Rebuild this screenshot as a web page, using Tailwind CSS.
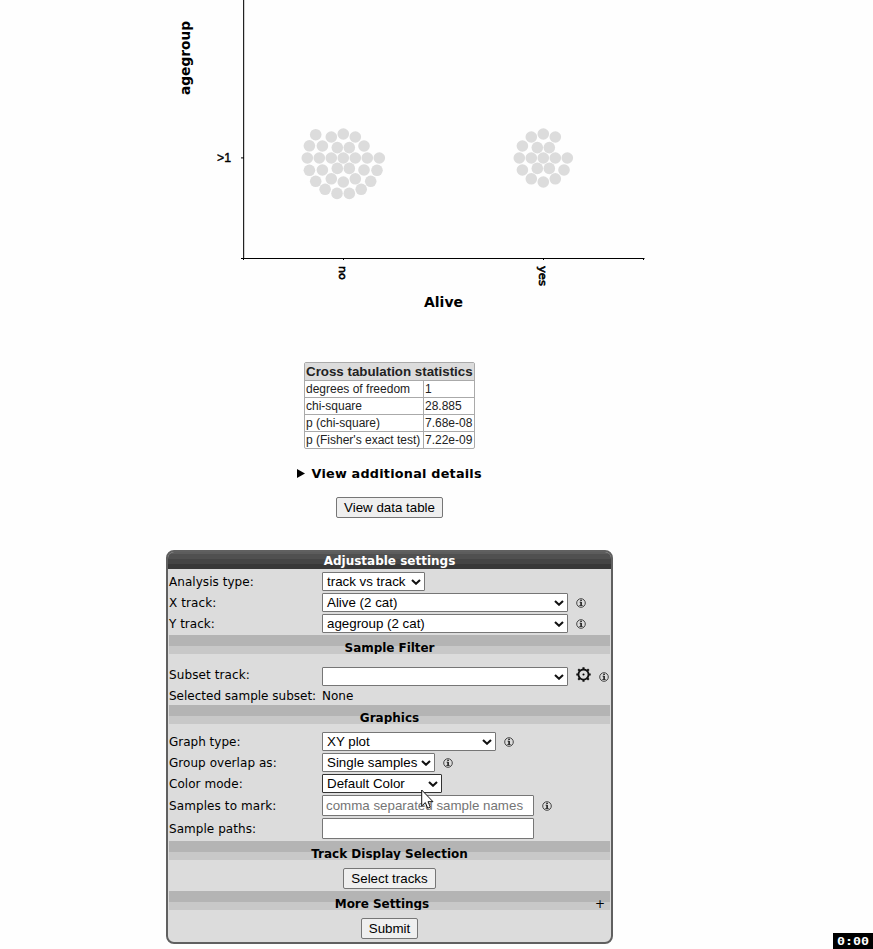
<!DOCTYPE html>
<html lang="en"><head><meta charset="utf-8"><title>Plot</title>
<script src="https://cdn.jsdelivr.net/npm/@tailwindcss/browser@4"></script></head>
<body class="relative h-[949px] w-[873px] overflow-hidden bg-[#fefefe] font-['DejaVu_Sans',sans-serif] text-[12px] text-black">
<svg class="block h-[320px] w-[873px]" viewBox="0 0 873 320">
<g stroke="#000" fill="none"><path d="M243.6 0V259" stroke="#222" stroke-width="1.2"/><path d="M241 258.5H644.5M343.5 258V260M543.5 258V260M643.5 258V260M241 157.9H244M243.5 258V260"/></g>
<g fill="#dcdcdc">
<circle cx="307.3" cy="158" r="5.8"/><circle cx="319.3" cy="158" r="5.8"/><circle cx="331.3" cy="158" r="5.8"/><circle cx="343.3" cy="158" r="5.8"/><circle cx="355.3" cy="158" r="5.8"/><circle cx="367.3" cy="158" r="5.8"/><circle cx="379.3" cy="158" r="5.8"/>
<circle cx="315.7" cy="134.7" r="5.8"/><circle cx="331.3" cy="137" r="5.8"/><circle cx="343.3" cy="134" r="5.8"/><circle cx="355.3" cy="137" r="5.8"/><circle cx="309.4" cy="145.8" r="5.8"/><circle cx="322.4" cy="146" r="5.8"/><circle cx="337.3" cy="147.6" r="5.8"/><circle cx="349.3" cy="147.6" r="5.8"/><circle cx="364" cy="146" r="5.8"/>
<circle cx="309.4" cy="170.3" r="5.8"/><circle cx="322.4" cy="170" r="5.8"/><circle cx="337.3" cy="168.4" r="5.8"/><circle cx="349.3" cy="168.4" r="5.8"/><circle cx="364" cy="170" r="5.8"/><circle cx="377" cy="170.3" r="5.8"/><circle cx="315.7" cy="181.3" r="5.8"/><circle cx="331.3" cy="178.8" r="5.8"/><circle cx="343.3" cy="182" r="5.8"/><circle cx="355.3" cy="178.8" r="5.8"/><circle cx="370.7" cy="181.3" r="5.8"/><circle cx="325.1" cy="189.3" r="5.8"/><circle cx="337" cy="193.4" r="5.8"/><circle cx="349.3" cy="193.4" r="5.8"/><circle cx="361.2" cy="189.3" r="5.8"/>
<circle cx="519.3" cy="158" r="5.8"/><circle cx="531.3" cy="158" r="5.8"/><circle cx="543.3" cy="158" r="5.8"/><circle cx="555.3" cy="158" r="5.8"/><circle cx="567.3" cy="158" r="5.8"/>
<circle cx="531.3" cy="137" r="5.8"/><circle cx="543.3" cy="134" r="5.8"/><circle cx="555.3" cy="137" r="5.8"/><circle cx="522.4" cy="146" r="5.8"/><circle cx="537.3" cy="147.6" r="5.8"/><circle cx="549.3" cy="147.6" r="5.8"/><circle cx="522.4" cy="170" r="5.8"/><circle cx="537.3" cy="168.4" r="5.8"/><circle cx="549.3" cy="168.4" r="5.8"/><circle cx="564" cy="170" r="5.8"/><circle cx="531.3" cy="178.8" r="5.8"/><circle cx="543.3" cy="182" r="5.8"/><circle cx="555.3" cy="178.8" r="5.8"/></g>
<g font-family="DejaVu Sans, sans-serif" fill="#000">
<text transform="translate(190 95) rotate(-90)" font-size="13.6" font-weight="bold" textLength="74" lengthAdjust="spacingAndGlyphs">agegroup</text>
<text x="424" y="307" font-size="13.3" font-weight="bold" textLength="39" lengthAdjust="spacingAndGlyphs">Alive</text>
<text x="217" y="162" font-family="Liberation Sans, sans-serif" font-size="12" textLength="14" lengthAdjust="spacingAndGlyphs" stroke="#000" stroke-width=".4">&gt;1</text>
<text transform="translate(339 266) rotate(90)" font-size="11" stroke="#000" stroke-width=".6" textLength="14" lengthAdjust="spacingAndGlyphs">no</text>
<text transform="translate(539 266) rotate(90)" font-size="11" stroke="#000" stroke-width=".6" textLength="20" lengthAdjust="spacingAndGlyphs">yes</text></g>
</svg>
<svg class="hidden"><defs>
<symbol id="info" viewBox="0 0 10 10"><circle cx="5" cy="5" r="4.3" fill="none" stroke="#333" stroke-width=".9"/><path d="M3.6 4.2H5M3.3 7.5H6.7" fill="none" stroke="#222" stroke-width=".8"/><path d="M5.1 3.9V7.6" stroke="#111" stroke-width="1.5"/><rect x="4.3" y="1.7" width="1.5" height="1.4" fill="#111"/></symbol>
<symbol id="chev" viewBox="0 0 10 6"><path d="M1 1L5 4.7L9 1" fill="none" stroke="#111" stroke-width="2.1"/></symbol></defs></svg>
<main class="ml-[166px] w-[447px]">
<div class="flex flex-col items-center pt-[42px]">
<div class="h-[87px] w-[171px] rounded-[2px] border border-[#aaa] bg-white font-['Liberation_Sans',sans-serif] text-[12px] text-[#222]">
<div class="h-[18px] border-b border-[#aaa] bg-[#dcdcdc] pl-px text-[13.33px] leading-[17px] font-bold whitespace-nowrap"><span>Cross tabulation statistics</span></div>
<div class="grid grid-cols-[119px_50px] grid-rows-[17px_17px_17px_16px] leading-[16px] whitespace-nowrap [&>*]:border-[#aaa] [&>*]:pl-[1px] [&>*:nth-child(odd)]:border-r [&>*:nth-child(-n+6)]:border-b">
<div>degrees of freedom</div><div>1</div><div>chi-square</div><div>28.885</div><div>p (chi-square)</div><div>7.68e-08</div><div>p (Fisher's exact test)</div><div>7.22e-09</div></div></div>
<div class="mt-[16px] flex h-[17px] w-[186px] items-center text-[12.8px] font-bold whitespace-nowrap"><svg class="mr-[7px] h-[9px] w-[8px] shrink-0" viewBox="0 0 8 9"><path d="M0 0L8 4.5L0 9z"/></svg><span class="tracking-[0.22px]">View additional details</span></div>
<div class="mt-[15px] flex h-[21px] w-[107px] items-center justify-center rounded-[2px] border border-[#767676] bg-[#efefef] font-['Liberation_Sans',sans-serif] text-[13.33px]">View data table</div>
</div>
<section class="mt-[32px] h-[394px] overflow-hidden rounded-[8px] border-2 border-[#606060] bg-[#dcdcdc]">
<h2 class="h-[17px] bg-[linear-gradient(#5c5c5c_0_2px,#505050_2px_7px,#454545_7px_12px,#383838_12px)] text-center text-[12px] leading-[18px] font-bold text-white">Adjustable settings</h2>
<div class="grid grid-cols-[153px_1fr] grid-rows-[21px_21px_21px] items-center pt-[2px] pl-px">
<span class="tracking-[0.05px]">Analysis type:</span><div class="flex h-[19px] w-[103px] items-center justify-between rounded-[1px] border border-[#767676] bg-white pr-[3px] pl-[4px] font-['Liberation_Sans',sans-serif] text-[13.33px]">track vs track<svg class="h-[6px] w-[10px]"><use href="#chev"/></svg></div>
<span class="tracking-[0.1px]">X track:</span><div class="flex items-center gap-[8.4px]"><div class="flex h-[19px] w-[246px] items-center justify-between rounded-[1px] border border-[#767676] bg-white pr-[3px] pl-[4px] font-['Liberation_Sans',sans-serif] text-[13.33px]">Alive (2 cat)<svg class="h-[6px] w-[10px]"><use href="#chev"/></svg></div><svg class="h-[10px] w-[10px]"><use href="#info"/></svg></div>
<span>Y track:</span><div class="flex items-center gap-[8.4px]"><div class="flex h-[19px] w-[246px] items-center justify-between rounded-[1px] border border-[#767676] bg-white pr-[3px] pl-[4px] font-['Liberation_Sans',sans-serif] text-[13.33px]">agegroup (2 cat)<svg class="h-[6px] w-[10px]"><use href="#chev"/></svg></div><svg class="h-[10px] w-[10px]"><use href="#info"/></svg></div>
</div>
<h3 class="mx-px mt-px h-[19px] overflow-hidden bg-[linear-gradient(#b4b4b4_0_11px,#c8c8c8_11px)] text-center leading-[26px] font-bold tracking-[-0.05px]">Sample Filter</h3>
<div class="grid grid-cols-[153px_1fr] grid-rows-[19px_21px] items-center pt-[13px] pl-px">
<span class="-mt-[4px] tracking-[0.1px]">Subset track:</span><div class="flex items-center"><div class="flex h-[19px] w-[246px] items-center justify-end rounded-[1px] border border-[#767676] bg-white pr-[3px]"><svg class="h-[6px] w-[10px]"><use href="#chev"/></svg></div><svg class="-mt-[4px] ml-[8px] h-[15px] w-[15px]" viewBox="0 0 16 16"><circle cx="8" cy="8" r="5.4" fill="none" stroke="#111" stroke-width="2"/><circle cx="8" cy="8" r="1.1"/><path d="M8 0.3V3M8 13V15.7M.3 8H3M13 8H15.7M2.4 2.4L4.5 4.5M11.5 11.5L13.6 13.6M13.6 2.4L11.5 4.5M4.5 11.5L2.4 13.6" stroke="#111" stroke-width="2.2"/></svg><svg class="ml-[8.4px] h-[10px] w-[10px]"><use href="#info"/></svg></div>
<span class="-mt-[2px]">Selected sample subset:</span><span class="-mt-[2px]">None</span></div>
<h3 class="mx-px -mt-[2px] h-[19px] overflow-hidden bg-[linear-gradient(#b4b4b4_0_11px,#c8c8c8_11px)] text-center leading-[26px] font-bold">Graphics</h3>
<div class="grid grid-cols-[153px_1fr] grid-rows-[21px_21px_21px_23px_23px] items-center pt-[7px] pl-px">
<span>Graph type:</span><div class="flex items-center gap-[8.4px]"><div class="flex h-[19px] w-[174px] items-center justify-between rounded-[1px] border border-[#767676] bg-white pr-[3px] pl-[4px] font-['Liberation_Sans',sans-serif] text-[13.33px]">XY plot<svg class="h-[6px] w-[10px]"><use href="#chev"/></svg></div><svg class="h-[10px] w-[10px]"><use href="#info"/></svg></div>
<span class="tracking-[0.05px]">Group overlap as:</span><div class="flex items-center gap-[8.4px]"><div class="flex h-[19px] w-[113px] items-center justify-between rounded-[1px] border border-[#767676] bg-white pr-[3px] pl-[4px] font-['Liberation_Sans',sans-serif] text-[13.33px] whitespace-nowrap">Single samples<svg class="h-[6px] w-[10px] shrink-0"><use href="#chev"/></svg></div><svg class="h-[10px] w-[10px]"><use href="#info"/></svg></div>
<span class="tracking-[0.05px]">Color mode:</span><div class="flex h-[19px] w-[120px] items-center justify-between rounded-[1px] border border-[#333] bg-white pr-[3px] pl-[4px] font-['Liberation_Sans',sans-serif] text-[13.33px]">Default Color<svg class="h-[6px] w-[10px]"><use href="#chev"/></svg></div>
<span class="tracking-[0.1px]">Samples to mark:</span><div class="flex items-center gap-[8.4px]"><div class="flex h-[21px] w-[212px] items-center rounded-[1px] border border-[#767676] bg-white pl-[3px] font-['Liberation_Sans',sans-serif] text-[13.33px] whitespace-nowrap text-[#757575]">comma separated sample names</div><svg class="h-[10px] w-[10px]"><use href="#info"/></svg></div>
<span class="tracking-[0.05px]">Sample paths:</span><div class="h-[21px] w-[212px] rounded-[1px] border border-[#767676] bg-white"></div></div>
<h3 class="mx-px mt-px h-[19px] overflow-hidden bg-[linear-gradient(#b4b4b4_0_11px,#c8c8c8_11px)] text-center leading-[26px] font-bold">Track Display Selection</h3>
<div class="mx-auto mt-[8px] flex h-[21px] w-[93px] items-center justify-center rounded-[2px] border border-[#767676] bg-[#efefef] font-['Liberation_Sans',sans-serif] text-[13.33px]">Select tracks</div>
<h3 class="mx-px mt-[2px] grid h-[19px] grid-cols-[426px_15px] overflow-hidden bg-[linear-gradient(#b4b4b4_0_11px,#c8c8c8_11px)] leading-[26px]"><span class="text-center font-bold tracking-[-0.05px]">More Settings</span><span>+</span></h3>
<div class="mx-auto mt-[8px] flex h-[21px] w-[57px] items-center justify-center rounded-[2px] border border-[#767676] bg-[#efefef] font-['Liberation_Sans',sans-serif] text-[13.33px]">Submit</div>
</section></main>
<svg class="absolute top-[789px] left-[421px] h-[21px] w-[14px]" viewBox="0 0 14 21"><path d="M.7 1V17L4.3 13.6L6.7 19.2L9.3 18.1L7 12.7H12z" fill="#fff" stroke="#111"/></svg>
<div class="absolute top-[933px] left-[833px] flex h-[16px] w-[40px] items-center justify-center bg-black font-['DejaVu_Sans_Mono',monospace] text-[10px] font-bold text-white"><span class="inline-block scale-x-[1.33]">0:00</span></div>
</body></html>
